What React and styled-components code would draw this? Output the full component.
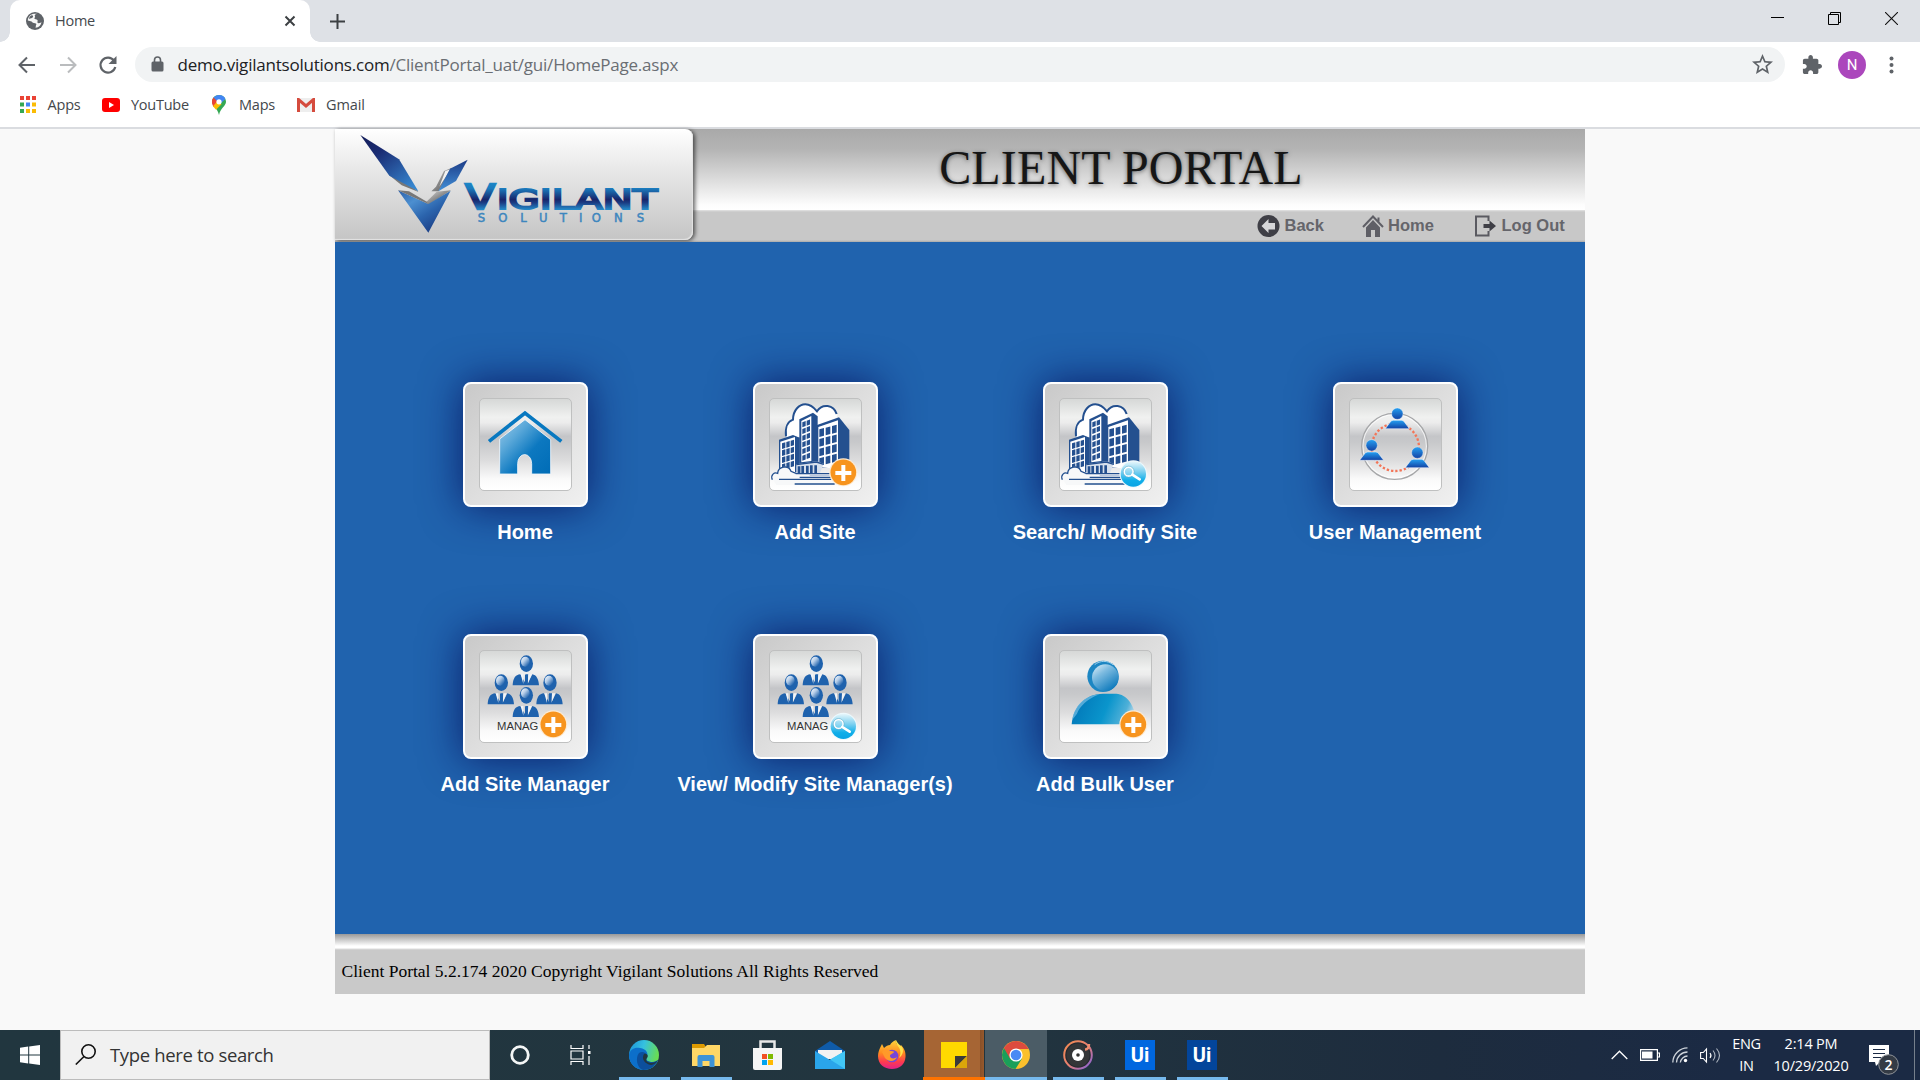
import React from 'react';
import styled, { createGlobalStyle } from 'styled-components';

const GlobalStyle = createGlobalStyle`
  * { box-sizing: border-box; }
  body { margin: 0; background: #f9f9f9; overflow: hidden; }
  svg { display: block; flex: none; }
`;

const ui = `'Segoe UI', 'Open Sans', 'Noto Sans', sans-serif`;

const Screen = styled.div`
  width: 1920px;
  height: 1080px;
  display: flex;
  flex-direction: column;
  background: #f9f9f9;
  font-family: ${ui};
`;
const SharedDefs = styled.svg`
  width: 0;
  height: 0;
`;

/* ---------- browser ---------- */
const TabStrip = styled.div`
  height: 42px;
  flex: none;
  display: flex;
  background: #dee1e6;
`;
const TabFlare = styled.div`
  width: 10px;
  background: radial-gradient(circle at ${(p) => (p.$right ? '100% 0' : '0 0')}, #dee1e6 9.5px, #fff 10px)
    0 32px / 10px 10px no-repeat;
`;
const Tab = styled.div`
  width: 300px;
  display: flex;
  align-items: center;
  padding: 0 13px 0 16px;
  background: #fff;
  border-radius: 10px 10px 0 0;
`;
const TabTitle = styled.span`
  flex: 1;
  margin-left: 11px;
  padding-bottom: 2px;
  font-size: 14.5px;
  letter-spacing: -0.25px;
  color: #45494d;
`;
const NewTab = styled.div`
  display: flex;
  align-items: center;
  margin-left: 10px;
  flex: 1;
`;
const WindowButtons = styled.div`
  display: flex;
`;
const WindowButton = styled.div`
  width: 57px;
  height: 36px;
  display: flex;
  align-items: center;
  justify-content: center;
`;
const Toolbar = styled.div`
  height: 45px;
  flex: none;
  display: flex;
  align-items: center;
  padding: 0 16px 0 17px;
  background: #fff;
`;
const NavIcons = styled.div`
  display: flex;
  gap: 20.5px;
  width: 118px;
`;
const AddressBar = styled.div`
  width: 1650px;
  height: 35px;
  display: flex;
  align-items: center;
  padding: 0 12px 0 14px;
  border-radius: 18px;
  background: #f1f3f4;
`;
const Url = styled.div`
  flex: 1;
  margin-left: 11.5px;
  font-size: 17px;
  letter-spacing: -0.22px;
  white-space: nowrap;
  color: #6a6e73;
`;
const Domain = styled.span`
  color: #202124;
`;
const Avatar = styled.div`
  width: 28px;
  height: 28px;
  margin: 0 23px 0 16px;
  display: flex;
  align-items: center;
  justify-content: center;
  border-radius: 50%;
  background: #ab47bc;
  color: #fff;
  font: 15px Roboto, sans-serif;
`;
const Extensions = styled.div`
  margin-left: 17px;
`;
const Bookmarks = styled.div`
  height: 42px;
  flex: none;
  display: flex;
  align-items: center;
  padding: 0 0 5px 19px;
  background: #fff;
  border-bottom: 2px solid #dadce0;
`;
const Bookmark = styled.div`
  width: ${(p) => p.$width}px;
  display: flex;
  align-items: center;
  gap: ${(p) => p.$gap}px;
  font-size: 14.5px;
  letter-spacing: ${(p) => p.$tracking || 0}px;
  color: #44484c;
`;

/* ---------- portal ---------- */
const Page = styled.main`
  width: 1250px;
  height: 865px;
  margin: 0 auto 36px;
  display: flex;
  flex-direction: column;
`;
const Header = styled.header`
  height: 113px;
  flex: none;
  display: flex;
  background: linear-gradient(#a9a9a9 0, #b4b4b4 20px, #fdfdfd 76px, #fff 81px, #e4e4e4 81px, #c8c8c8 83px, #c8c8c8 111px, #aaa 113px);
`;
const LogoPanel = styled.div`
  width: 358px;
  height: 111px;
  flex: none;
  border-radius: 0 8px 8px 0;
  background: linear-gradient(#fff, #e9e9e9 35%, #c5c5c5);
  box-shadow: 2px 1px 4px rgba(0, 0, 0, 0.6), inset -1px -1px 1px #e4e4e4;
`;
const HeaderMain = styled.div`
  flex: 1;
  display: flex;
  flex-direction: column;
`;
const Title = styled.h1`
  height: 82px;
  margin: 0;
  padding-right: 36px;
  text-align: center;
  font: 48px/78px 'Liberation Serif', serif;
  letter-spacing: 0.15px;
  color: #161616;
  text-shadow: 0 1px 4px rgba(0, 0, 0, 0.5);
`;
const PortalNav = styled.nav`
  height: 29px;
  display: flex;
  align-items: center;
  padding-left: 564px;
`;
const NavLink = styled.a`
  width: ${(p) => p.$width}px;
  display: flex;
  align-items: center;
  gap: 4.5px;
  font: bold 16.5px 'Liberation Sans', sans-serif;
  color: #65656b;
  white-space: nowrap;
`;
const Board = styled.section`
  height: 692px;
  flex: none;
  padding: 140px 0 0 45px;
  display: grid;
  grid-template-columns: repeat(4, 290px);
  grid-auto-rows: 252px;
  background: #2063ae;
`;
const Tile = styled.div`
  display: flex;
  flex-direction: column;
  align-items: center;
`;
const TileButton = styled.div`
  width: 125px;
  height: 125px;
  padding: 14px;
  border: 2px solid #fff;
  border-radius: 8px;
  background: linear-gradient(135deg, #c9c9c9, #dedede 50%, #f0f0f0);
  box-shadow: 0 0 42px rgba(5, 12, 88, 0.8);
`;
const TileFace = styled.div`
  width: 93px;
  height: 93px;
  overflow: hidden;
  border: 1.5px solid #bfc0c0;
  border-radius: 5px;
  background: linear-gradient(#d6d8d7, #f0f1f0 20%, #ececec 26%, #c4c5c8 41%, #c8c9cb 48%, #dcdcdd 67%, #fafafa 88%, #fff);
`;
const TileLabel = styled.div`
  margin-top: 14px;
  font: bold 20px/23px 'Liberation Sans', sans-serif;
  color: #fff;
  white-space: nowrap;
`;
const Shade = styled.div`
  height: 16px;
  flex: none;
  background: linear-gradient(#999, #c4c4c4 5px, #fff 12px, #fff 14px, #ddd 15px, #c9c9c9);
`;
const Footer = styled.footer`
  height: 44px;
  flex: none;
  padding-left: 6.5px;
  background: #c9c9c9;
  font: 17.5px/43px 'Liberation Serif', serif;
  color: #000;
  white-space: nowrap;
`;

/* ---------- taskbar ---------- */
const Taskbar = styled.div`
  height: 50px;
  flex: none;
  display: flex;
  background: linear-gradient(90deg, #21363f, #22353f 50%, #1d2c3e 75%, #1b2a44 90%);
`;
const StartButton = styled.div`
  width: 60px;
  display: flex;
  align-items: center;
  justify-content: center;
`;
const SearchBox = styled.div`
  width: 430px;
  display: flex;
  align-items: center;
  padding: 0 0 2px 14px;
  gap: 14px;
  border: 1px solid #bcbcbc;
  background: #f1f1f1;
  font-size: 18.5px;
  letter-spacing: -0.35px;
  color: #333;
`;
const SystemSlot = styled.div`
  width: 60px;
  display: flex;
  align-items: center;
  justify-content: center;
`;
const AppSlot = styled.div`
  width: 62px;
  display: flex;
  align-items: center;
  justify-content: center;
  background: ${(p) =>
    p.$state === 'alert'
      ? 'linear-gradient(90deg, transparent 1px, #a66534 1px, #a66534 57px, #87502a 57px, #98592c 61px, transparent 61px)'
      : p.$state === 'active'
      ? '#4b5c66'
      : 'transparent'};
  box-shadow: ${(p) => (p.$state === 'alert' ? 'inset 0 -3px #ff7300' : p.$state === 'active' ? 'inset 0 -3px #76b9ed' : 'none')};
  ${(p) =>
    p.$state === 'open' &&
    `background: linear-gradient(#76b9ed, #76b9ed) 6px 47px / 51px 3px no-repeat;`}
`;
const AppRow = styled.div`
  margin-left: 3px;
  flex: 1;
  display: flex;
`;
const UiLogo = styled.div`
  width: 30px;
  height: 30px;
  background: ${(p) => p.$color};
  color: #fff;
  font: bold 20px/31px Roboto, sans-serif;
  text-align: center;
`;
const Tray = styled.div`
  display: flex;
  align-items: center;
  color: #fff;
`;
const TrayIcons = styled.div`
  width: 120px;
  display: flex;
  align-items: center;
  gap: 12px;
`;
const TrayText = styled.div`
  width: ${(p) => p.$width}px;
  text-align: center;
  font-size: 14.5px;
  line-height: 22px;
  letter-spacing: ${(p) => p.$tracking}px;
  padding-bottom: 1px;
  white-space: nowrap;
`;
const Notices = styled.div`
  width: 55px;
  height: 50px;
  padding: 14px 0 0 9px;
  border-right: 1px solid #76808c;
  margin-right: 5px;
`;

/* ---------- icon pieces ---------- */
const GlobeIcon = () => (
  <svg width="18" height="18" viewBox="0 0 18 18">
    <circle cx="9" cy="9" r="9" fill="#5f6368" />
    <path d="M11 1.8C9 2.2 8.3 3.5 9 4.4c.5.8-.8 1-.6 2 .2 1 2.3.6 3 1.5.9 1.2-.6 1.7.2 2.8.6.9 2.2.2 3.9-.5C15 13 13 15.4 9.5 15.8c.6-1.2.1-2.2.8-3.2.6-.9-1-1.6-2.3-1.7-1.6 0-1.9-1.5-3.3-1.7L1.8 8.6C2 5 4.6 2 8 1.7z" fill="#fff" opacity=".95" />
    <path d="M5.2 3.4C6.8 3 7.6 4 6.8 5.3 6 6.500 4.2 6 3.5 7.2 2.8 6 3.5 4.3 5.2 3.4z" fill="#5f6368" />
  </svg>
);
const Stroke = ({ w, h, d, c = '#5f6368', s = 2, vb }) => (
  <svg width={w} height={h} viewBox={vb || `0 0 ${w} ${h}`} fill="none" stroke={c} strokeWidth={s}>
    <path d={d} />
  </svg>
);

const PlusBadge = ({ x, y }) => (
  <g>
    <circle cx={x} cy={y} r="42" fill="#fdebd3" />
    <circle cx={x} cy={y} r="38.5" fill="#f7941e" />
    <path d={`M${x - 24} ${y + 2}h48M${x} ${y - 22}v48`} stroke="#fff" strokeWidth="12" />
  </g>
);
const FindBadge = ({ x, y }) => (
  <g>
    <circle cx={x} cy={y} r="41" fill="#eef9fd" />
    <circle cx={x} cy={y} r="38" fill="url(#find)" />
    <circle cx={x - 14} cy={y - 7} r="13.5" fill="#ffffff30" stroke="#fff" strokeWidth="5" />
    <circle cx={x - 14} cy={y - 7} r="16.5" fill="none" stroke="#5fa9c4" strokeWidth="1.5" />
    <path d={`M${x - 3} ${y + 2}l22 14`} stroke="#fff" strokeWidth="8" strokeLinecap="round" />
  </g>
);
const Face = ({ box, children }) => {
  const [x, y] = box;
  return (
    <svg width="90" height="90" viewBox={`${x + 52} ${y + 51} 270 270`}>
      {children}
    </svg>
  );
};

const HouseArt = () => (
  <Face box={[99, 95]}>
    <path d="M210 266L286 208l77 60V371H306V340a20 26 0 0 0-42 0V371H210z" fill="url(#house)" stroke="#f4f8fb" strokeWidth="2.5" />
    <path d="M178 273L286 188l109 85" fill="none" stroke="#0878c0" strokeWidth="11" />
  </Face>
);

const windows = (cols, rows, x, y, w, h, dx, dy, slope) =>
  Array.from({ length: cols * rows }, (_, i) => {
    const cx = x + (i % cols) * dx;
    const cy = y + Math.floor(i / cols) * dy + (i % cols) * slope;
    const k = (slope / dx) * w;
    return <path key={i} d={`M${cx} ${cy}l${w} ${k}v${h}l${-w} ${-k}z`} fill="#24508f" />;
  });

const SiteArt = ({ badge }) => (
  <Face box={[969, 95]}>
    <path d="M1068 262C1064 232 1074 213 1089 209C1088 180 1106 161 1127 161C1144 160 1155 170 1162 181C1178 156 1215 163 1222 194L1210 260H1100L1080 262z" fill="#fff" />
    <path d="M1069 258C1066 232 1074 213 1090 208C1090 180 1108 162 1127 162C1144 162 1153 172 1162 183C1178 158 1212 163 1221 191" fill="none" stroke="#24508f" strokeWidth="6" />
    <path d="M1048 268L1090 254L1110 262V366H1048z" fill="#24508f" />
    <path d="M1052 274L1096 260V366L1052 362z" fill="#fff" />
    {windows(3, 4, 1057, 279, 10, 17, 13, 21, -4)}
    <path d="M1109 207L1150 187L1164 198V336L1146 368H1109z" fill="#24508f" />
    <path d="M1115 212L1145 197V332L1115 336z" fill="#fff" />
    {windows(2, 6, 1118, 216, 10, 15, 13, 20, -5)}
    <path d="M1162 224L1228 201L1259 239V352H1162z" fill="#24508f" />
    <path d="M1166 230L1225 210V356L1166 350z" fill="#fff" />
    {windows(3, 4, 1169, 237, 14, 23, 19, 29, -5)}
    <path d="M1100 342L1160 333L1182 340L1170 370H1100z" fill="#d7e0ec" />
    <path d="M1100 343L1160 335L1182 342" fill="none" stroke="#24508f" strokeWidth="4" />
    <path d="M1108 348v20M1119 347v21M1133 346v22M1145 345v23M1158 345v23" stroke="#24508f" strokeWidth="8" />
    <path d="M1030 388C1020 372 1035 363 1044 368C1045 347 1080 341 1085 362L1100 368H1284V392H1230L1220 404H1040z" fill="#f7f8f9" />
    <path d="M1028 388C1022 373 1034 365 1044 369C1045 349 1077 342 1084 363L1099 369" fill="none" stroke="#24508f" strokeWidth="4" />
    <path d="M1098 370H1200M1110 381H1215M1048 387H1205M1095 401H1215" fill="none" stroke="#24508f" strokeWidth="4" />
    <path d="M1140 375H1200" stroke="#aebfd8" strokeWidth="3" />
    {badge === 'plus' ? <PlusBadge x={1241} y={366} /> : <FindBadge x={1241} y={371} />}
  </Face>
);

const Member = ({ x, y }) => (
  <g>
    <path d={`M${x - 36} ${y + 45}l15-20q3-5 9-5h24q6 0 9 5l15 20z`} fill="url(#member)" stroke="#f4f8ff" strokeWidth="1.5" />
    <circle cx={x} cy={y} r="17" fill="url(#member)" stroke="#f4f8ff" strokeWidth="1" />
  </g>
);
const UsersArt = () => (
  <Face box={[999, 95]}>
    <circle cx="1185" cy="288" r="96" fill="none" stroke="#fff" strokeWidth="5" opacity=".7" />
    <circle cx="1185" cy="288" r="99" fill="none" stroke="#a6a7a9" strokeWidth="4" />
    <circle cx="1187" cy="291" r="71" fill="none" stroke="#f37558" strokeWidth="7" strokeDasharray="7 6" />
    <Member x={1193} y={190} />
    <Member x={1116} y={285} />
    <Member x={1253} y={307} />
  </Face>
);

const Manager = ({ x, y }) => (
  <g>
    <path d={`M${x - 41} ${y + 65}c1-20 8-32 23-33l15 26v-26h9l-1 26 13-26c12 2 19 14 20 33z`} fill="#1f62ad" />
    <path d={`M${x - 17} ${y + 32}h8v29zM${x + 6} ${y + 32}h10l-12 29z`} fill="#f2f4f7" />
    <path d={`M${x - 4} ${y + 34}h8v28h-8z`} fill="#1f62ad" />
    <ellipse cx={x} cy={y} rx="20" ry="25" fill="#1f62ad" />
    <ellipse cx={x - 3} cy={y - 6} rx="13" ry="15" fill="url(#gloss)" />
  </g>
);
const ManagersArt = ({ badge }) => (
  <Face box={[99, 71]}>
    <Manager x={290} y={160} />
    <Manager x={215} y={217} />
    <Manager x={361} y={217} />
    <Manager x={290} y={255} />
    <text x="202" y="360" fontFamily="'Liberation Sans', sans-serif" fontSize="34" fill="#333" textLength="124" lengthAdjust="spacingAndGlyphs">
      MANAG
    </text>
    {badge === 'plus' ? <PlusBadge x={371} y={342} /> : <FindBadge x={371} y={348} />}
  </Face>
);
const BulkArt = () => (
  <Face box={[129, 71]}>
    <path d="M216 342C220 285 262 250 310 250H350C380 252 405 280 412 342z" fill="url(#body)" />
    <path d="M217 330C226 285 255 255 300 252C262 265 240 290 232 310z" fill="#6fb9e2" opacity=".75" />
    <circle cx="310" cy="198" r="47" fill="#1c86c3" />
    <circle cx="317" cy="202" r="40" fill="url(#head)" />
    <path d="M285 163C300 150 325 150 340 163" stroke="#9fd0ec" strokeWidth="3" fill="none" />
    <PlusBadge x={401} y={342} />
  </Face>
);

const VigilantLogo = () => (
  <svg width="357" height="110" viewBox="15 27 1071 330">
    <path d="M176 164L215 196L266 216L240 196z" fill="#777" />
    <path d="M91 45L207 118L265 214L178 167z" fill="url(#wing)" />
    <path d="M342 153L366 143L326 214L304 214L318 200z" fill="url(#silver)" />
    <path d="M346 153L362 148L328 200z" fill="#f2f2f2" />
    <path d="M413 119L378 183L325 214L360 146z" fill="url(#wing2)" />
    <path d="M288 247L320 215L363 211L296 254z" fill="url(#silver)" />
    <path d="M204 211L295 252L362 212L295 338z" fill="url(#arrow)" />
    <path d="M204 211L237 214L288 244L295 252z" fill="#777" />
    <g fill="url(#word)" stroke="url(#word)" fontFamily="'DejaVu Sans', sans-serif">
      <text x="406" y="266" fontSize="101" strokeWidth="7" textLength="90" lengthAdjust="spacingAndGlyphs">V</text>
      <text x="500" y="266" fontSize="81" strokeWidth="6" textLength="482" lengthAdjust="spacingAndGlyphs">IGILANT</text>
    </g>
    <text x="443 505 571 627 689 747 785 852 920" y="306" fontSize="35" fill="#3d86be" stroke="#3d86be" strokeWidth="1.5" fontFamily="'DejaVu Sans', sans-serif">
      SOLUTIONS
    </text>
  </svg>
);

const Gradient = ({ id, stops, x2 = 0, y2 = 1, ...rest }) => (
  <linearGradient id={id} x1="0" y1="0" x2={x2} y2={y2} {...rest}>
    {stops.map(([o, c]) => (
      <stop key={o} offset={o} stopColor={c} />
    ))}
  </linearGradient>
);

const tiles = [
  ['Home', <HouseArt />],
  ['Add Site', <SiteArt badge="plus" />],
  ['Search/ Modify Site', <SiteArt badge="find" />],
  ['User Management', <UsersArt />],
  ['Add Site Manager', <ManagersArt badge="plus" />],
  ['View/ Modify Site Manager(s)', <ManagersArt badge="find" />],
  ['Add Bulk User', <BulkArt />],
];

const appColors = ['#ea4335', '#ea4335', '#ea4335', '#34a853', '#4285f4', '#fbbc04', '#34a853', '#fbbc04', '#fbbc04'];

const EdgeIcon = () => (
  <svg width="30" height="30" viewBox="0 0 30 30">
    <circle cx="15" cy="15" r="15" fill="url(#edge)" />
    <path d="M0 15C1 9 6 7 11 8c7 1 9 6 6 10-1 2 1 4 6 4 3 0 5-1 6-2-2 6-8 10-14 10C6 30 0 23 0 15z" fill="#0c6fca" />
    <path d="M10 13c3-2 7-1 8 3-1 2-2 5 4 6 3 .4 5-.8 7-2-3 7-9 10-15 10-6-2-8-12-4-17z" fill="#0c4f9c" />
    <path d="M15 14c3-1 5 2 3 4-2 3 0 4 3 5 3 .5 6-1 8-3-2 3-4 4.500-7 5-6-1-10-6-7-11z" fill="#21363f" />
  </svg>
);
const ChromeIcon = () => (
  <svg width="28" height="28" viewBox="0 0 28 28">
    <circle cx="14" cy="14" r="14" fill="#fbc02d" />
    <path d="M14 14L1.9 7A14 14 0 0 0 13.5 28L20 17.5z" fill="#1a9f5a" />
    <path d="M1.9 7A14 14 0 0 1 26.1 7L26.4 8H14L8 17.5z" fill="#dd4b3e" />
    <circle cx="14" cy="14" r="6.6" fill="#fff" />
    <circle cx="14" cy="14" r="5.3" fill="#4a8af4" />
  </svg>
);
const FirefoxIcon = () => (
  <svg width="28" height="30" viewBox="0 0 28 30">
    <path d="M2 8l2-4 2 4c2-2 4-3 6-3 1-2 3-4 6-5-1 3 2 5 4 7l1-2c3 3 5 7 4.500 12C27 25 21 29 14 29 6 29 0 24 0 16c0-3 1-6 2-8z" fill="url(#fire)" />
    <circle cx="14" cy="16" r="6.300" fill="#7746d9" />
    <path d="M4 12c2-3 6-3 8-1 2 0 4 0 4 1-1 2-4 2-4 4 0 3 5 3 7 1-1 4-8 6-12 1C6 16 5 14 4 12z" fill="#ff9a2a" />
    <path d="M18 0c-1 4 3 6 4 10 1 3 0 6-1 8 4-3 5-8 3-11-2-2-5-4-6-7z" fill="#ffe14a" />
  </svg>
);

export default function App() {
  return (
    <Screen>
      <GlobalStyle />
      <SharedDefs>
        <defs>
          <Gradient id="find" stops={[[0, '#e8f7fc'], [0.4, '#7fd1f0'], [0.75, '#10aee9'], [1, '#0aa4e4']]} />
          <Gradient id="house" x2={1} stops={[[0, '#9fcdeb'], [0.3, '#5aa8d9'], [0.6, '#0c78c0'], [1, '#006cb6']]} />
          <Gradient id="member" stops={[[0, '#25a0f2'], [1, '#1242a4']]} />
          <Gradient id="gloss" x2={1} stops={[[0, '#fff'], [0.4, '#b5cde8'], [0.85, '#1f62ad']]} />
          <Gradient id="body" x2={1} y2={0.2} stops={[[0, '#0072b5'], [0.6, '#0a95cc'], [0.9, '#4fb0d8'], [1, '#9fcfe5']]} />
          <Gradient id="head" x2={0.7} stops={[[0, '#e6f4fb'], [0.4, '#7dbbe0'], [1, '#0b78bb']]} />
          <Gradient id="wing" x2={0.8} stops={[[0, '#141d58'], [0.35, '#1a2c74'], [1, '#3686cf']]} />
          <Gradient id="wing2" stops={[[0, '#1c3b86'], [1, '#4290d8']]} />
          <Gradient id="silver" x2={1} stops={[[0, '#ddd'], [0.5, '#888'], [1, '#555']]} />
          <Gradient id="arrow" x2={0.8} stops={[[0, '#2c5fa8'], [0.3, '#4c8fd0'], [0.6, '#2b64ad'], [1, '#17357c']]} />
          <Gradient id="word" gradientUnits="userSpaceOnUse" y2={268} y1={190} stops={[[0, '#1c86c6'], [0.2, '#1b7bbd'], [0.62, '#17266b'], [0.75, '#1b3d84'], [1, '#2487c6']]} />
          <Gradient id="edge" x2={1} y2={0.3} stops={[[0, '#1a8fd6'], [0.5, '#35c1e0'], [1, '#68dc55']]} />
          <Gradient id="fire" stops={[[0, '#ffd43b'], [0.45, '#ff8a1f'], [0.75, '#ff3b4e'], [1, '#e0218a']]} />
          <Gradient id="groove" x2={1} stops={[[0, '#f28b50'], [0.5, '#e88070'], [1, '#7d5fe0']]} />
        </defs>
      </SharedDefs>

      <TabStrip>
        <TabFlare />
        <Tab>
          <GlobeIcon />
          <TabTitle>Home</TabTitle>
          <Stroke w={14} h={14} d="M2.500 2.500l9 9M11.500 2.500l-9 9" c="#3c4043" />
        </Tab>
        <TabFlare $right />
        <NewTab>
          <Stroke w={15} h={15} d="M7.500 0v15M0 7.500h15" c="#3c4043" />
        </NewTab>
        <WindowButtons>
          <WindowButton><Stroke w={13} h={13} d="M0 5.500h13" c="#000" s={1} /></WindowButton>
          <WindowButton><Stroke w={13} h={13} d="M.5 2.500h10v10H.5zM2.500 2.500v-2h10v10h-2" c="#000" s={1} /></WindowButton>
          <WindowButton><Stroke w={13} h={13} d="M0 0l13 13M13 0L0 13" c="#111" s={1.1} /></WindowButton>
        </WindowButtons>
      </TabStrip>

      <Toolbar>
        <NavIcons>
          <Stroke w={20} h={20} d="M18 10H3M10 2.500L2.500 10l7.500 7.500" />
          <Stroke w={20} h={20} d="M2 10h15M10 2.500l7.500 7.500-7.500 7.500" c="#babcbe" />
          <svg width="20" height="20" viewBox="0 0 20 20">
            <path d="M16 5.500A7.500 7.500 0 1 0 17.300 12" fill="none" stroke="#5f6368" strokeWidth="2.200" />
            <path d="M18.500 1v8h-8z" fill="#5f6368" />
          </svg>
        </NavIcons>
        <AddressBar>
          <svg width="17" height="17" viewBox="0 0 17 17">
            <rect x="2.500" y="5.500" width="12" height="10" rx="1.500" fill="#5f6368" />
            <path d="M5.500 7V4a3 3 0 0 1 6 0v3" fill="none" stroke="#5f6368" strokeWidth="1.600" />
          </svg>
          <Url>
            <Domain>demo.vigilantsolutions.com</Domain>/ClientPortal_uat/gui/HomePage.aspx
          </Url>
          <svg width="21" height="21" viewBox="2 2 20 20" fill="#5f6368">
            <path d="M22 9.240l-7.190-.62L12 2 9.190 8.630 2 9.240l5.460 4.730L5.820 21 12 17.270 18.180 21l-1.630-7.030L22 9.240zM12 15.400l-3.760 2.270 1-4.280-3.320-2.880 4.380-.38L12 6.100l1.710 4.040 4.380.38-3.320 2.880 1 4.280L12 15.400z" />
          </svg>
        </AddressBar>
        <Extensions>
          <svg width="20" height="20" viewBox="1 1 22 22" fill="#5f6368">
            <path d="M20.500 11H19V7c0-1.100-.9-2-2-2h-4V3.500C13 2.120 11.880 1 10.500 1S8 2.120 8 3.500V5H4c-1.100 0-1.990.9-1.990 2v3.800H3.500c1.490 0 2.700 1.210 2.700 2.700s-1.210 2.700-2.700 2.700H2V20c0 1.100.9 2 2 2h3.800v-1.500c0-1.490 1.210-2.700 2.700-2.700 1.490 0 2.700 1.210 2.700 2.700V22H17c1.100 0 2-.9 2-2v-4h1.500c1.380 0 2.500-1.120 2.500-2.500S21.880 11 20.500 11z" />
          </svg>
        </Extensions>
        <Avatar>N</Avatar>
        <svg width="5" height="18" viewBox="0 0 5 18" fill="#5f6368">
          <circle cx="2.500" cy="2.500" r="2" /><circle cx="2.500" cy="9" r="2" /><circle cx="2.500" cy="15.500" r="2" />
        </svg>
      </Toolbar>

      <Bookmarks>
        <Bookmark $width={83} $gap={11.5} $tracking={-0.2}>
          <svg width="17" height="17" viewBox="0 0 17 17">
            {appColors.map((c, i) => (
              <rect key={i} x={1 + (i % 3) * 6} y={Math.floor(i / 3) * 6.500} width="4" height="4" fill={c} />
            ))}
          </svg>
          Apps
        </Bookmark>
        <Bookmark $width={108} $gap={11} $tracking={-0.25}>
          <svg width="18" height="14" viewBox="0 0 18 14">
            <rect width="18" height="14" rx="3" fill="#f00" /><path d="M7 4l5 3-5 3z" fill="#fff" />
          </svg>
          YouTube
        </Bookmark>
        <Bookmark $width={87} $gap={11} $tracking={-0.2}>
          <svg width="18" height="20" viewBox="0 0 18 20">
            <path d="M9 0C4.800 0 2 3 2 6.800c0 4 5.500 6.400 7 13.200 1.500-6.800 7-9.200 7-13.200C16 3 13.200 0 9 0z" fill="#34a853" />
            <path d="M3.500 2.500L9 7l-5.600 5C2.500 10 2 8.500 2 6.800c0-1.700.5-3.200 1.500-4.300z" fill="#ea4335" />
            <path d="M3.600 2.500C5 .9 6.900 0 9 0c3 0 5.400 1.600 6.400 4L10 9z" fill="#4285f4" />
            <path d="M3 11.200L7.500 6l4 3.200L6 14.800z" fill="#fbbc04" />
            <circle cx="9" cy="6.800" r="2.600" fill="#fff" />
          </svg>
          Maps
        </Bookmark>
        <Bookmark $width={80} $gap={11} $tracking={-0.1}>
          <svg width="18" height="14" viewBox="0 0 18 14">
            <rect width="18" height="14" rx="1" fill="#eee" />
            <path d="M1.500 14V1.500L9 8l7.500-6.500V14" fill="none" stroke="#d54b3d" strokeWidth="3" />
          </svg>
          Gmail
        </Bookmark>
      </Bookmarks>

      <Page>
        <Header>
          <LogoPanel><VigilantLogo /></LogoPanel>
          <HeaderMain>
            <Title>CLIENT PORTAL</Title>
            <PortalNav>
              <NavLink $width={104.5}>
                <svg width="23" height="23" viewBox="0 0 23 23">
                  <circle cx="11.500" cy="12" r="11" fill="#3f3f46" />
                  <path d="M4.500 12L11.500 5v4h6.500v6.500h-6.500V19z" fill="#d6d6d8" />
                </svg>
                Back
              </NavLink>
              <NavLink $width={112.5}>
                <svg width="22" height="22" viewBox="0 0 22 22">
                  <path d="M1 12L11 1.500 21 12M16.500 2.500v4" fill="none" stroke="#5f5f66" strokeWidth="2" />
                  <path d="M4 12.500L11 5l7 7.500V22h-5v-7H9v7H4z" fill="#5f5f66" />
                </svg>
                Home
              </NavLink>
              <NavLink $width={95}>
                <svg width="23" height="22" viewBox="0 0 23 22">
                  <path d="M14.500 6V1.500H2v19h12.500V16" fill="none" stroke="#5a5a61" strokeWidth="2" />
                  <path d="M9.500 9h6V5.500L22 11l-6.500 5.500V13h-6z" fill="#3f3f46" />
                </svg>
                Log Out
              </NavLink>
            </PortalNav>
          </HeaderMain>
        </Header>
        <Board>
          {tiles.map(([label, art]) => (
            <Tile key={label}>
              <TileButton><TileFace>{art}</TileFace></TileButton>
              <TileLabel>{label}</TileLabel>
            </Tile>
          ))}
        </Board>
        <Shade />
        <Footer>Client Portal 5.2.174 2020 Copyright Vigilant Solutions All Rights Reserved</Footer>
      </Page>

      <Taskbar>
        <StartButton>
          <svg width="20" height="20" viewBox="0 0 20 20" fill="#fff">
            <path d="M0 2.800L8.200 1.600V9.500H0zM9.200 1.400L20 0V9.500H9.200zM0 10.500H8.200V18.500L0 17.300zM9.200 10.500H20V20L9.200 18.600z" />
          </svg>
        </StartButton>
        <SearchBox>
          <svg width="21" height="21" viewBox="0 0 21 21" fill="none" stroke="#111" strokeWidth="1.600">
            <circle cx="13.500" cy="7.500" r="6.700" /><path d="M9 12.500L.8 20.500" />
          </svg>
          Type here to search
        </SearchBox>
        <SystemSlot>
          <svg width="20" height="20"><circle cx="10" cy="10" r="8.300" fill="none" stroke="#f4f6f6" strokeWidth="2.800" /></svg>
        </SystemSlot>
        <SystemSlot>
          <svg width="21" height="20" viewBox="0 0 21 20" fill="none" stroke="#fff" strokeWidth="1.200">
            <path d="M1 0v3.500h12V0M1 20v-3.500h12V20M1 6h12v8H1zM19 0v4M19 11v9" /><rect x="18" y="6" width="2.500" height="3" fill="#fff" stroke="none" />
          </svg>
        </SystemSlot>
        <AppRow>
          <AppSlot $state="open"><EdgeIcon /></AppSlot>
          <AppSlot $state="open">
            <svg width="28" height="25" viewBox="0 0 28 25">
              <path d="M0 1h12l2 3v4H0z" fill="#dd9a00" /><path d="M0 5h12l3-3h13v21H0z" fill="#ffd766" />
              <path d="M5.500 24V14a2 2 0 0 1 2-2h13a2 2 0 0 1 2 2v10h-5v-6h-7v6z" fill="#3e93d6" />
            </svg>
          </AppSlot>
          <AppSlot>
            <svg width="30" height="30" viewBox="0 0 30 30">
              <path d="M7.500 9V1.500h14V9" fill="none" stroke="#e8e8e8" strokeWidth="2.500" /><path d="M0 8h29v20q0 2-2 2H2q-2 0-2-2z" fill="#f5f5f5" />
              <path d="M9 14h5v5H9z" fill="#f25022" /><path d="M15 14h5v5h-5z" fill="#7fba00" /><path d="M9 20h5v5H9z" fill="#00a4ef" /><path d="M15 20h5v5h-5z" fill="#ffb900" />
            </svg>
          </AppSlot>
          <AppSlot>
            <svg width="30" height="28" viewBox="0 0 30 28">
              <path d="M0 10L15 0l15 10v5H0z" fill="#0f5ba8" /><path d="M3 9h24v9H3z" fill="#f2f2f2" />
              <path d="M0 10l15 9L30 10v18H0z" fill="#2aa5ea" /><path d="M30 28L15 18.500 30 10z" fill="#42c6f5" />
            </svg>
          </AppSlot>
          <AppSlot><FirefoxIcon /></AppSlot>
          <AppSlot $state="alert">
            <svg width="26" height="26" viewBox="0 0 26 26">
              <path d="M0 0h26v14L14 26H0z" fill="#ffd900" /><path d="M14 26V14h12z" fill="#3a3a3a" /><path d="M26 14v12H14z" fill="#dba60a" />
            </svg>
          </AppSlot>
          <AppSlot $state="active"><ChromeIcon /></AppSlot>
          <AppSlot $state="open">
            <svg width="30" height="30" viewBox="0 0 30 30">
              <circle cx="15" cy="15" r="13.800" fill="#252a30" stroke="url(#groove)" strokeWidth="2" />
              <circle cx="15" cy="15" r="11.500" fill="#343638" /><circle cx="15" cy="15" r="6" fill="#fff" /><circle cx="15" cy="15" r="1.800" fill="#333" />
              <path d="M22 9.500q4 0 4-5.500" fill="none" stroke="#f08d70" strokeWidth="2.500" />
            </svg>
          </AppSlot>
          <AppSlot $state="open"><UiLogo $color="#0067df">Ui</UiLogo></AppSlot>
          <AppSlot $state="open"><UiLogo $color="#03459b">Ui</UiLogo></AppSlot>
        </AppRow>
        <Tray>
          <TrayIcons>
            <Stroke w={17} h={10} d="M.7 9l7.800-7.800L16.300 9" c="#fff" s={1.300} />
            <svg width="20" height="12" viewBox="0 0 20 12">
              <path d="M.6.6h16.800v10.800H.6zM18 4h1.500v4H18" fill="none" stroke="#fff" strokeWidth="1.200" /><rect x="2" y="2.500" width="10.500" height="7" fill="#fff" />
            </svg>
            <svg width="16" height="16" viewBox="0 0 16 16" fill="none" stroke="#cdd3da" strokeWidth="1.300">
              <path d="M.8 15.500A15 15 0 0 1 15.500.8M4.500 15.500A11 11 0 0 1 15.500 5M8.300 15.500a7.500 7.500 0 0 1 7.200-6.500" /><circle cx="13.500" cy="13.500" r="1.700" fill="#fff" stroke="none" />
            </svg>
            <svg width="21" height="17" viewBox="0 0 21 17" fill="none" stroke="#fff" strokeWidth="1.100">
              <path d="M.6 5.500h2.700L6.500 2v13L3.300 11.500H.6zM10 6a4 4 0 0 1 0 5" /><path d="M13 3.500q4 5 0 10M16.500 1.500q6 7 0 14" stroke="#aeb6c0" />
            </svg>
          </TrayIcons>
          <TrayText $width={31} $tracking={-0.3}>ENG<br />IN</TrayText>
          <TrayText $width={98} $tracking={-0.2}>2:14 PM<br />10/29/2020</TrayText>
          <Notices>
            <svg width="32" height="31" viewBox="0 0 32 31">
              <path d="M0 1h20v17H11l-4 4-1-4H0z" fill="#fff" /><path d="M4 5.500h12M4 9.500h12M4 13.500h8" stroke="#1b2a44" strokeWidth="1.200" />
              <circle cx="19.500" cy="20.500" r="9.800" fill="#343b45" stroke="#909499" strokeWidth="1" />
              <text x="19.500" y="25.800" textAnchor="middle" fontFamily={ui} fontWeight="600" fontSize="14" fill="#fff">2</text>
            </svg>
          </Notices>
        </Tray>
      </Taskbar>
    </Screen>
  );
}
